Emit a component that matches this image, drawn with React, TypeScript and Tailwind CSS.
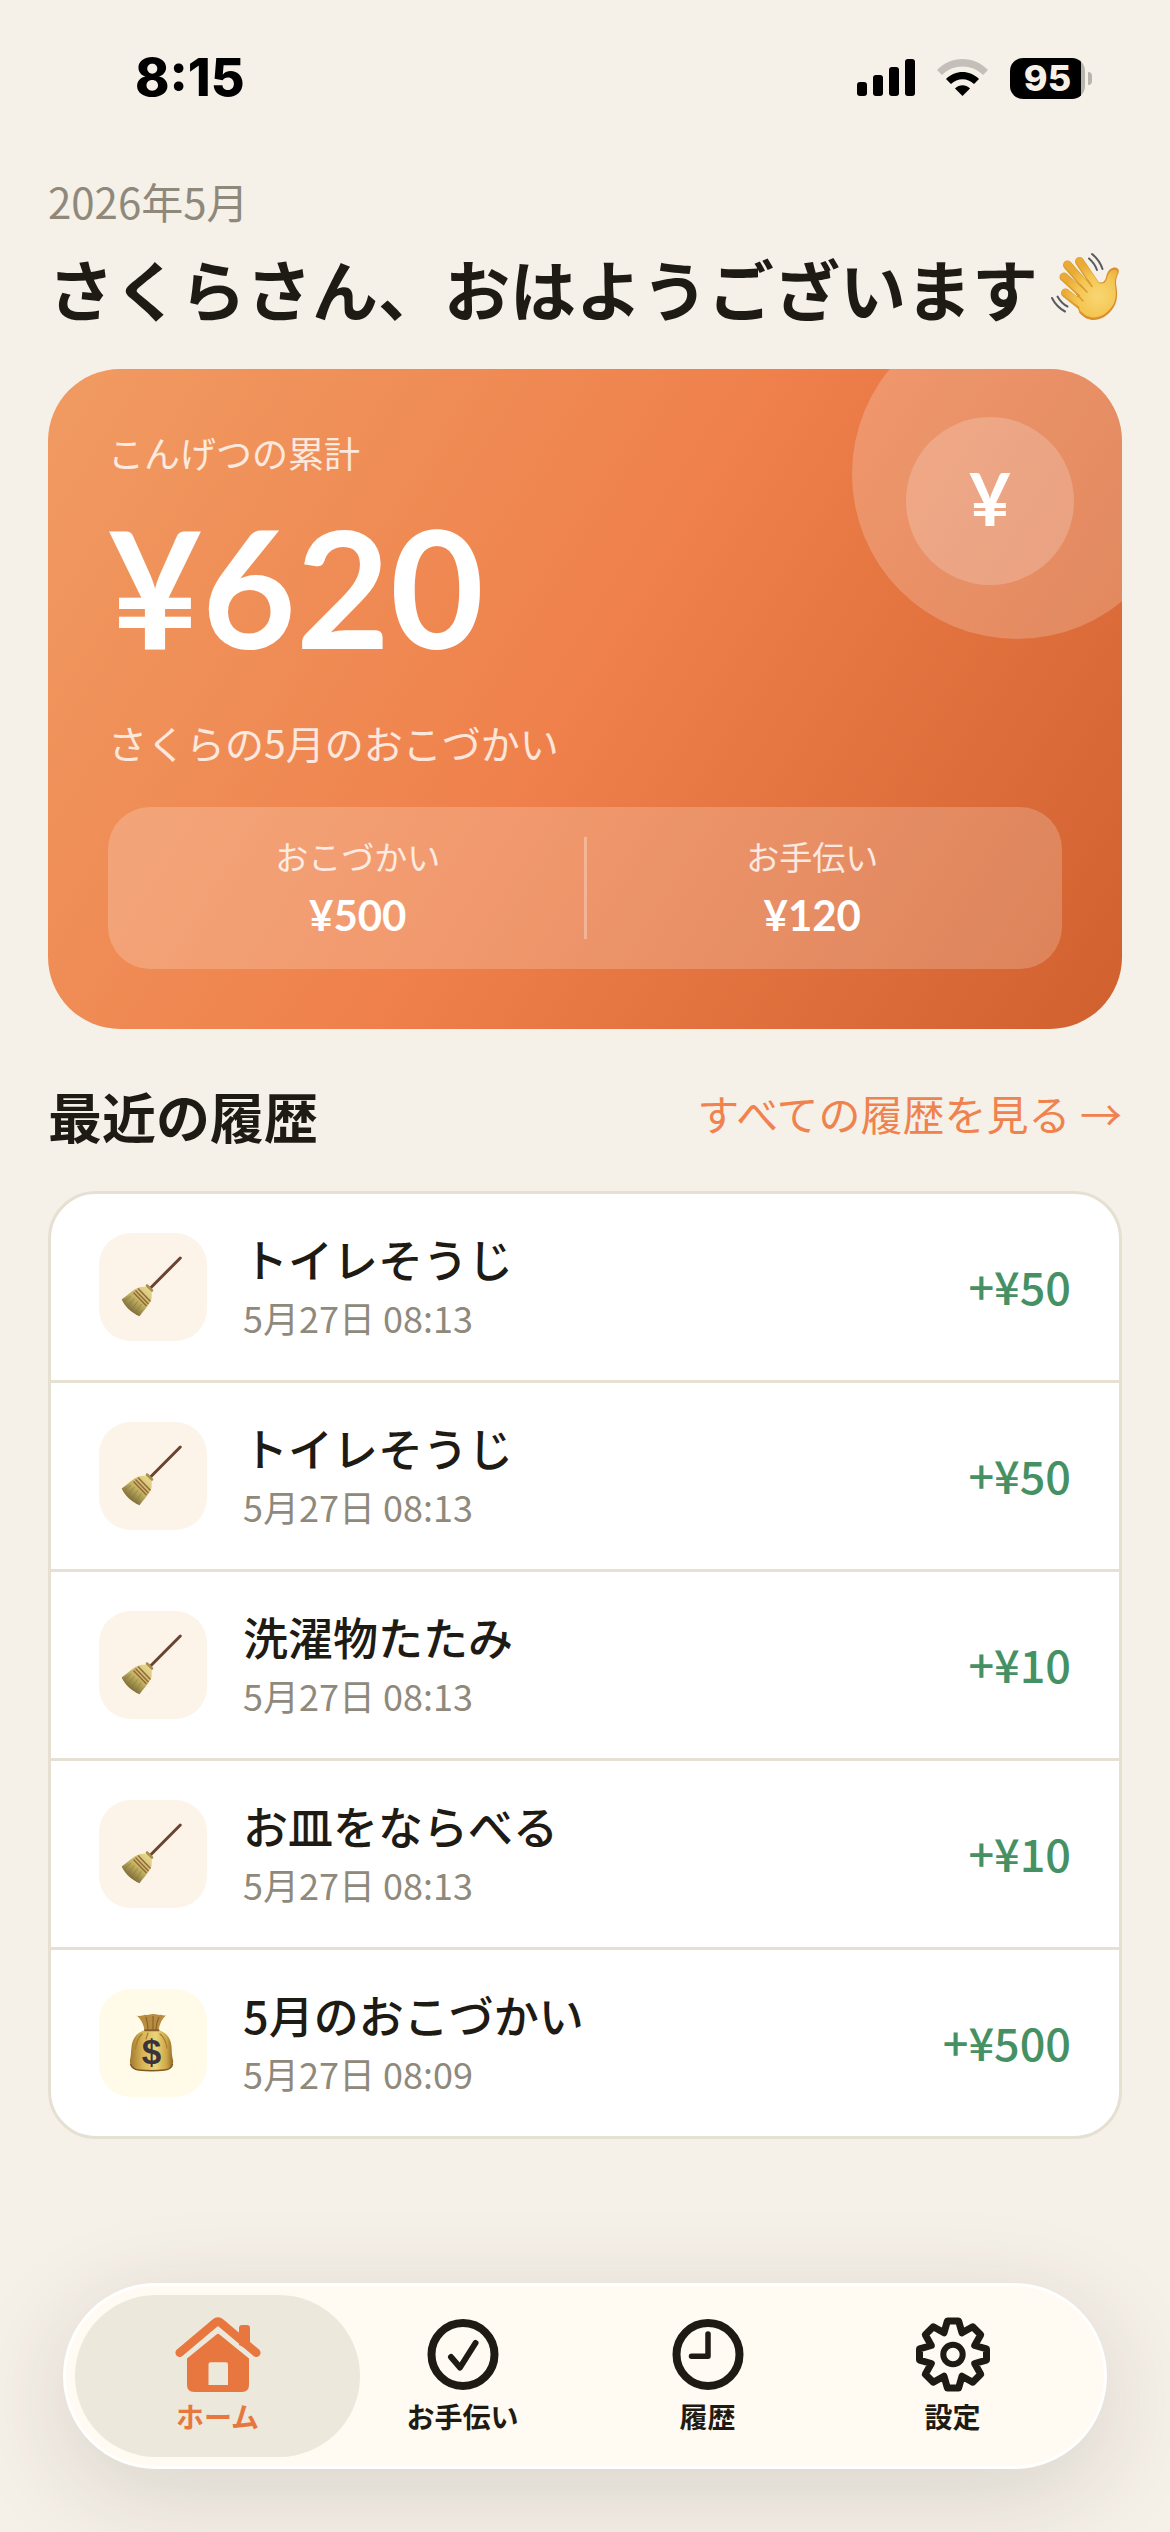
import type { ReactNode } from 'react';
import clsx from 'clsx';

interface HistoryEntry {
  id: number;
  title: string;
  date: string;
  amount: number;
  kind: 'chore' | 'allowance';
}

const history: HistoryEntry[] = [
  { id: 1, title: 'トイレそうじ', date: '5月27日 08:13', amount: 50, kind: 'chore' },
  { id: 2, title: 'トイレそうじ', date: '5月27日 08:13', amount: 50, kind: 'chore' },
  { id: 3, title: '洗濯物たたみ', date: '5月27日 08:13', amount: 10, kind: 'chore' },
  { id: 4, title: 'お皿をならべる', date: '5月27日 08:13', amount: 10, kind: 'chore' },
  { id: 5, title: '5月のおこづかい', date: '5月27日 08:09', amount: 500, kind: 'allowance' },
];

function WaveIcon() {
  return (
    <svg viewBox="0 0 72 72" className="size-[72px] shrink-0" role="img" aria-label="手をふる" fill="none">
      <defs>
        <radialGradient id="palm" cx="48" cy="45" r="34" gradientUnits="userSpaceOnUse">
          <stop offset="0" stopColor="#f9d673" />
          <stop offset="0.6" stopColor="#f4c652" />
          <stop offset="1" stopColor="#e9ab35" />
        </radialGradient>
      </defs>
      <g strokeLinecap="round" stroke="#dc9b33" strokeWidth="9">
        <path d="M29.5 10.5 48 38" />
        <path d="M17.5 14 40 40" />
        <path d="M14 26 38 48" />
        <path d="M15.5 42 38 60" />
      </g>
      <path
        d="M44 27c4 5 9 6.500 11.500 1 1.500-5 2-9 7-11 4-1.500 7.500 1.500 6 5-2.500 5-3 9-2 14 1.500 9 .5 16-4 22-5 7-12 11-19 11-5 0-9-2-14-7L25 48l10-12z"
        fill="#d98f2c"
      />
      <g strokeLinecap="round" stroke="url(#palm)" strokeWidth="7">
        <path d="M29.500 10 48 37" />
        <path d="M17.500 13.500 40 39" />
        <path d="M14 25.500 38 47" />
        <path d="M15.500 41.500 38 58" />
      </g>
      <path
        d="M44 28c4 5 10 6.500 12.500 1 1.500-5 2-8.500 6.500-10 3-1 5.500 1 4.300 3.500-2.500 5-3 9-2 14 1.200 8 .2 15-4 20-5 6.500-11 10-17.500 10-5 0-9-2-14-7L27 48l10-12z"
        fill="url(#palm)"
      />
      <path d="M37.500 29 42 35.500M30.500 34 37 41M26.500 43 33 50" stroke="#d89a33" strokeWidth="1.500" strokeLinecap="round" />
      <g stroke="#575a60" strokeWidth="2" strokeLinecap="round">
        <path d="M42 3c5 4 8.500 9 10.500 15" />
        <path d="M39 7.500c4 3.500 6.500 7 8 11.500" />
        <path d="M2 47c3 6 7.500 10.500 13 13.500" />
        <path d="M7.500 45.500c2.500 4.500 6 8 10 10" />
      </g>
    </svg>
  );
}

function BroomIcon() {
  return (
    <svg viewBox="0 0 66 66" className="size-[66px]" aria-hidden="true" fill="none">
      <defs>
        <linearGradient id="straw" x1="29" y1="34" x2="10" y2="57" gradientUnits="userSpaceOnUse">
          <stop offset="0" stopColor="#e8da90" />
          <stop offset="0.55" stopColor="#c4b462" />
          <stop offset="1" stopColor="#7d6c38" />
        </linearGradient>
      </defs>
      <path d="M31 33.500 60.300 4" stroke="#6b4431" strokeWidth="3" strokeLinecap="round" />
      <path
        d="M28 32.500 32 36.500 31.500 45C29.500 51 24 56 19.500 62.300 12 59 5 53 1.700 45.500 7 42 10 38 14.500 35.500 18 33 23 32 28 32.500z"
        fill="url(#straw)"
      />
      <path d="M18 34.500 30.500 47.500M15.500 36.500 28.500 50M13.500 38.500 26.500 52" stroke="#94683d" strokeWidth="1.500" />
      <path d="m5 47 6-5M8.500 51.500l6-7.500M12 55l6-8M16 58.500l5.500-8.500" stroke="#85733a" strokeWidth="0.500" />
      <path d="m27 31.500 5 5" stroke="#a98d4c" strokeWidth="2.500" strokeLinecap="round" />
    </svg>
  );
}

function MoneyBagIcon() {
  return (
    <svg viewBox="0 0 66 66" className="size-[66px]" aria-hidden="true" fill="none">
      <defs>
        <linearGradient id="bag" x1="10" y1="0" x2="53" y2="0" gradientUnits="userSpaceOnUse">
          <stop offset="0" stopColor="#a3792f" />
          <stop offset="0.3" stopColor="#d8b655" />
          <stop offset="0.6" stopColor="#ecd47a" />
          <stop offset="0.85" stopColor="#cda648" />
          <stop offset="1" stopColor="#8f6828" />
        </linearGradient>
      </defs>
      <path d="M16.700 5.500c4 1.500 6-.8 9-.8 3 1 4-.7 7-.7 4-.5 5 1.500 8 .8 2 .6 3.500 1 5.300.5-4 4-6.500 8.500-7.500 15h-14c-1-6.500-3.500-11-7.800-14.800z" fill="#b98d3f" />
      <path d="M26 7c1 4 2 8 2 13M33 6v14M39 7c-2 4-3 8-3 13" stroke="#8c6430" strokeWidth="1.200" />
      <path
        d="M25 20h13.500c8 2.500 12.500 8 13 17 .3 5 .3 9 1.500 13 .7 4-1 6.500-4 8.500-5 2.700-29 2.700-35 0-3-1.500-4.500-4.500-4-8.500 1-4 1-8 1.500-13 1-9 5.500-14.500 13.500-17z"
        fill="url(#bag)"
      />
      <path d="M25 20.300h13.500" stroke="#8a5f2b" strokeWidth="2" strokeLinecap="round" />
      <path d="M22 24c-4 4-6 9-6.500 15M28 23l-2 6M40 24c4 3 6 8 7 14" stroke="#a67c34" strokeWidth="1.200" strokeLinecap="round" />
      <path d="M10.500 54c1 3 3.500 5.500 8 6 9 1 18 1 26 0 4.500-.5 7.500-2.500 8-6" stroke="#7d5a24" strokeWidth="1.500" />
      <text x="31.500" y="54" textAnchor="middle" fill="#3a3339" className="font-['Liberation_Sans',sans-serif] text-[35px] font-bold">
        $
      </text>
    </svg>
  );
}

function HomeIcon() {
  return (
    <svg viewBox="0 0 88 76" className="h-[76px] w-[88px]" aria-hidden="true">
      <path d="M65 28V11q0-3 3-3h5q3 0 3 3v22z" fill="currentColor" />
      <path d="M5.700 35.700 41 6q3-2.500 6 0L82.300 35.700" fill="none" stroke="currentColor" strokeWidth="8.500" strokeLinecap="round" strokeLinejoin="round" />
      <path
        fillRule="evenodd"
        d="M42.500 17.500q1.500-1.300 3 0L75 41.500V68q0 7-7 7H20q-7 0-7-7V41.500zM36.500 45.300q-2 0-2 2V68H54V47.300q0-2-2-2z"
        fill="currentColor"
      />
    </svg>
  );
}

function CheckIcon() {
  return (
    <svg viewBox="0 0 88 76" className="h-[76px] w-[88px]" aria-hidden="true" fill="none" stroke="currentColor" strokeLinecap="round" strokeLinejoin="round">
      <circle cx="44" cy="37.500" r="31.500" strokeWidth="8" />
      <path d="m32 40 9 10.500L56.500 26" strokeWidth="6" />
    </svg>
  );
}

function ClockIcon() {
  return (
    <svg viewBox="0 0 88 76" className="h-[76px] w-[88px]" aria-hidden="true" fill="none" stroke="currentColor" strokeLinecap="round" strokeLinejoin="round">
      <circle cx="44" cy="37.500" r="31.500" strokeWidth="8" />
      <path d="M44 17v22.300H27.500" strokeWidth="5.500" />
    </svg>
  );
}

function GearIcon() {
  return (
    <svg viewBox="-44 -37.5 88 76" className="h-[76px] w-[88px]" aria-hidden="true" fill="none" stroke="currentColor" strokeLinejoin="round">
      <path
        d="M-5.600-33.500 5.600-33.500 9-21.700 19.700-27.700 27.700-19.700 21.700-9 33.500-5.600 33.500 5.600 21.700 9 27.700 19.700 19.700 27.700 9 21.700 5.600 33.500-5.600 33.500-9 21.700-19.700 27.700-27.700 19.700-21.700 9-33.500 5.600-33.500-5.600-21.700-9-27.700-19.700-19.700-27.700-9-21.700z"
        strokeWidth="7"
      />
      <circle r="9.700" strokeWidth="6" />
    </svg>
  );
}

function StatusBar() {
  return (
    <div className="flex h-[156px] items-center justify-between pr-[78px] pl-[135px] font-['Inter',sans-serif] text-black">
      <span className="text-[52px] font-extrabold">8:15</span>
      <div className="flex items-center gap-[22px]">
        <svg viewBox="0 0 58 38" className="h-[38px] w-[58px]" role="img" aria-label="電波" fill="currentColor">
          <rect x="0" y="23" width="10" height="14" rx="3" />
          <rect x="16" y="16" width="10" height="21" rx="3" />
          <rect x="32" y="8" width="10" height="29" rx="3" />
          <rect x="48" y="0" width="10" height="37" rx="3" />
        </svg>
        <svg viewBox="0 0 51 38" className="h-[38px] w-[51px]" role="img" aria-label="Wi-Fi" fill="currentColor">
          <path d="M0 11C14-3.600 37-3.600 51 11l-5 5C34.500 4.700 16.500 4.700 5 16z" opacity="0.2" />
          <path d="M9 20c9.500-9.300 23.500-9.300 33 0l-5 5c-6.500-6.300-16.500-6.300-23 0z" />
          <path d="M18 29.500c4.500-4.300 10.500-4.300 15 0L25.500 37z" />
        </svg>
        <div className="flex items-center gap-[3px]">
          <div className="flex h-[41px] w-[75px] items-center justify-center overflow-hidden rounded-[13px] bg-[linear-gradient(90deg,#000_95%,#b8b4ae_95%)] text-[36px] leading-none font-extrabold text-[#f5f0e8]">
            95
          </div>
          <div className="h-[13px] w-1 rounded-r-full bg-[#b8b4ae]" />
        </div>
      </div>
    </div>
  );
}

function BreakdownItem({ label, amount }: { label: string; amount: number }) {
  return (
    <div className="flex-1 text-center">
      <p className="text-[33px] leading-[38px] text-white/80">{label}</p>
      <p className="mt-4 font-['Lato',sans-serif] text-[42px] leading-[48px] font-bold">¥{amount}</p>
    </div>
  );
}

function SummaryCard() {
  return (
    <section className="relative mt-[34px] overflow-hidden rounded-[72px] bg-[linear-gradient(122deg,#f09b62_0%,#ef804b_50%,#d0612f_100%)] p-[60px] text-white">
      <div className="absolute -top-[60px] -right-[60px] size-[330px] rounded-full bg-white/20" />
      <div className="absolute top-12 right-12 flex size-[168px] items-center justify-center rounded-full bg-white/20 pb-1.5 font-['Lato',sans-serif] text-[72px] leading-none font-bold">
        ¥
      </div>
      <p className="text-[36px] leading-[46px] text-white/80">こんげつの累計</p>
      <p className="mt-[28px] font-['Lato',sans-serif] text-[162px] leading-[168px] font-bold">¥620</p>
      <p className="mt-[44px] text-[39px] leading-[54px] text-white/80">さくらの5月のおこづかい</p>
      <div className="mt-[38px] flex rounded-[42px] bg-white/20 px-6 py-[30px]">
        <BreakdownItem label="おこづかい" amount={500} />
        <div className="w-[3px] bg-white/30" />
        <BreakdownItem label="お手伝い" amount={120} />
      </div>
    </section>
  );
}

function HistoryRow({ entry }: { entry: HistoryEntry }) {
  return (
    <li className="flex items-center gap-9 px-12 py-[39px]">
      <div
        className={clsx(
          'flex size-[108px] shrink-0 items-center justify-center rounded-[32px]',
          entry.kind === 'chore' ? 'bg-[#fcf3e9]' : 'bg-[#fffbe8]',
        )}
      >
        {entry.kind === 'chore' ? <BroomIcon /> : <MoneyBagIcon />}
      </div>
      <div className="-my-1 flex-1">
        <p className="text-[45px] leading-[60px] font-medium">{entry.title}</p>
        <p className="text-[36px] leading-[56px] text-[#8f897c]">{entry.date}</p>
      </div>
      <p className="pb-0.5 text-[45px] leading-[60px] font-medium text-[#469163]">+¥{entry.amount}</p>
    </li>
  );
}

function TabButton({ label, icon, active = false }: { label: string; icon: ReactNode; active?: boolean }) {
  return (
    <button
      type="button"
      aria-current={active ? 'page' : undefined}
      className={clsx(
        '-mx-5 flex h-[162px] flex-col items-center rounded-full pt-[22px]',
        active && 'bg-[#ece8dc] text-[#e8773f]',
      )}
    >
      {icon}
      <span className="mt-0.5 text-[28px] leading-[42px] font-bold">{label}</span>
    </button>
  );
}

export default function App() {
  return (
    <div className="flex min-h-screen flex-col bg-[#f5f0e8] font-['Noto_Sans_CJK_JP',sans-serif] text-[#1e1a14]">
      <StatusBar />
      <main className="px-12 pt-[15px]">
        <p className="text-[42px] leading-[60px] text-[#8f897c]">2026年5月</p>
        <div className="mt-2 flex items-center gap-3">
          <h1 className="text-[66px] leading-[96px] font-bold whitespace-nowrap">さくらさん、おはようございます</h1>
          <WaveIcon />
        </div>
        <SummaryCard />
        <div className="mt-[42px] flex items-center justify-between">
          <h2 className="text-[54px] leading-[90px] font-bold">最近の履歴</h2>
          <a href="#history" className="pb-1.5 text-[42px] leading-[60px] text-[#f0824d]">
            すべての履歴を見る →
          </a>
        </div>
        <ul id="history" className="mt-[30px] divide-y-3 divide-[#e6e0d2] rounded-[48px] border-3 border-[#e6e0d2] bg-white">
          {history.map(entry => (
            <HistoryRow key={entry.id} entry={entry} />
          ))}
        </ul>
      </main>
      <nav className="sticky bottom-[63px] mx-[63px] mt-auto mb-[63px] grid grid-cols-4 rounded-full border-3 border-white bg-[#fffaf2] px-[29px] py-[9px] shadow-[0_24px_100px_rgba(60,50,35,0.15)]">
        <TabButton label="ホーム" icon={<HomeIcon />} active />
        <TabButton label="お手伝い" icon={<CheckIcon />} />
        <TabButton label="履歴" icon={<ClockIcon />} />
        <TabButton label="設定" icon={<GearIcon />} />
      </nav>
    </div>
  );
}
